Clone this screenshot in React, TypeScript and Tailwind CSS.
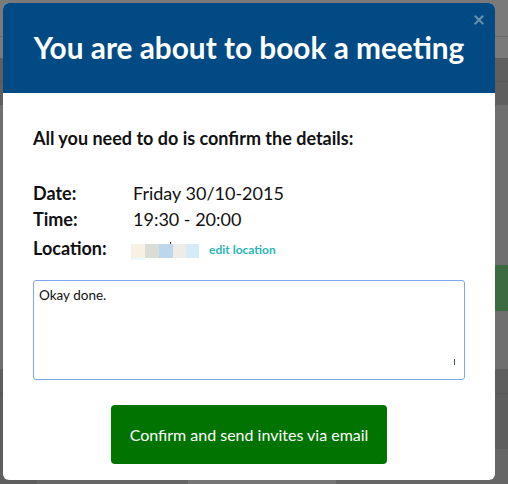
import React from 'react';

export default function App() {
  return (
    <div className="relative w-[508px] h-[484px] overflow-hidden bg-[#6f6f6f] font-['Lato',sans-serif]">
      {/* Dimmed page behind the modal */}
      <div className="flex flex-col">
        <div className="h-[36px] bg-[#7a7a7a]" />
        <div className="h-[1px] bg-[#686868]" />
        <div className="h-[21px] bg-[#7a7a7a]" />
        <div className="h-[24px] bg-[#5f5f5f] border-b border-[#585858]" />
        <div className="h-[23px] bg-[#5f5f5f]" />
        <div className="h-[160px] bg-[#6f6f6f]" />
        <div className="h-[46px] flex">
          <div className="w-[300px] bg-[#6f6f6f]" />
          <div className="flex-1 bg-[#3d6b3f]" />
        </div>
        <div className="h-[58px] bg-[#6f6f6f]" />
        <div className="h-[25px] bg-[#5e5e5e] border-b border-[#575757]" />
        <div className="h-[55px] bg-[#5e5e5e]" />
        <div className="h-[35px] bg-[#6f6f6f] flex">
          <div className="w-[37px] bg-[#5e5e5e]" />
          <div className="w-[151px] bg-[#666]" />
          <div className="w-[148px] bg-[#767676]" />
          <div className="flex-1 bg-[#666]" />
        </div>
      </div>

      {/* Modal */}
      <div className="absolute left-[3px] top-[3px] w-[492px] h-[477px] bg-white rounded-[6px] overflow-hidden">
        <div className="relative h-[90px] bg-[#024a84] flex items-center justify-center">
          <h1 className="text-[29.8px] font-bold text-white leading-none">
            You are about to book a meeting
          </h1>
          <span className="absolute right-[10px] top-[5px] text-[21px] leading-none font-bold text-[#6b8fae]">×</span>
        </div>

        <div className="px-[30px] pt-[34px]">
          <p className="text-[18px] font-bold text-[#111] leading-[22px]">
            All you need to do is confirm the details:
          </p>

          <div className="mt-[31px] text-[18px] text-[#111] leading-[26px]">
            <div className="flex">
              <span className="w-[100px] font-bold">Date:</span>
              <span>Friday 30/10-2015</span>
            </div>
            <div className="flex">
              <span className="w-[100px] font-bold">Time:</span>
              <span>19:30 - 20:00</span>
            </div>
            <div className="flex items-center">
              <span className="w-[98px] font-bold">Location:</span>
              <span className="relative flex mt-[6px]">
                <span className="w-[14px] h-[14px] bg-[#f7f0e4]" />
                <span className="w-[14px] h-[14px] bg-[#d9ddd5]" />
                <span className="w-[14px] h-[14px] bg-[#bcd6ea]" />
                <span className="w-[13px] h-[14px] bg-[#eeece8]" />
                <span className="w-[13px] h-[14px] bg-[#d5ebf7]" />
                <span className="absolute left-0 top-[14px] w-[14px] h-[2px] bg-[#e6fbfb]" />
                <span className="absolute left-[39px] -top-[2px] w-[1px] h-[2px] bg-[#4a2a2a]" />
              </span>
              <span className="ml-[10px] mt-[5px] text-[12px] font-bold text-[#2bb5b5]">edit location</span>
            </div>
          </div>

          <div className="relative mt-[17px] w-[432px] h-[100px] border border-[#7fa6e6] rounded-[3px] px-[5px] pt-[5px]">
            <p className="text-[13.5px] text-[#111] leading-[18px]">Okay done.</p>
            <span className="absolute right-[9px] bottom-[14px] w-[1px] h-[6px] bg-[#3a5a6a]" />
          </div>

          <div className="flex justify-center mt-[25px]">
            <button className="w-[276px] h-[59px] bg-[#007300] rounded-[4px] text-white text-[16px] font-normal">
              Confirm and send invites via email
            </button>
          </div>
        </div>
      </div>
    </div>
  );
}
